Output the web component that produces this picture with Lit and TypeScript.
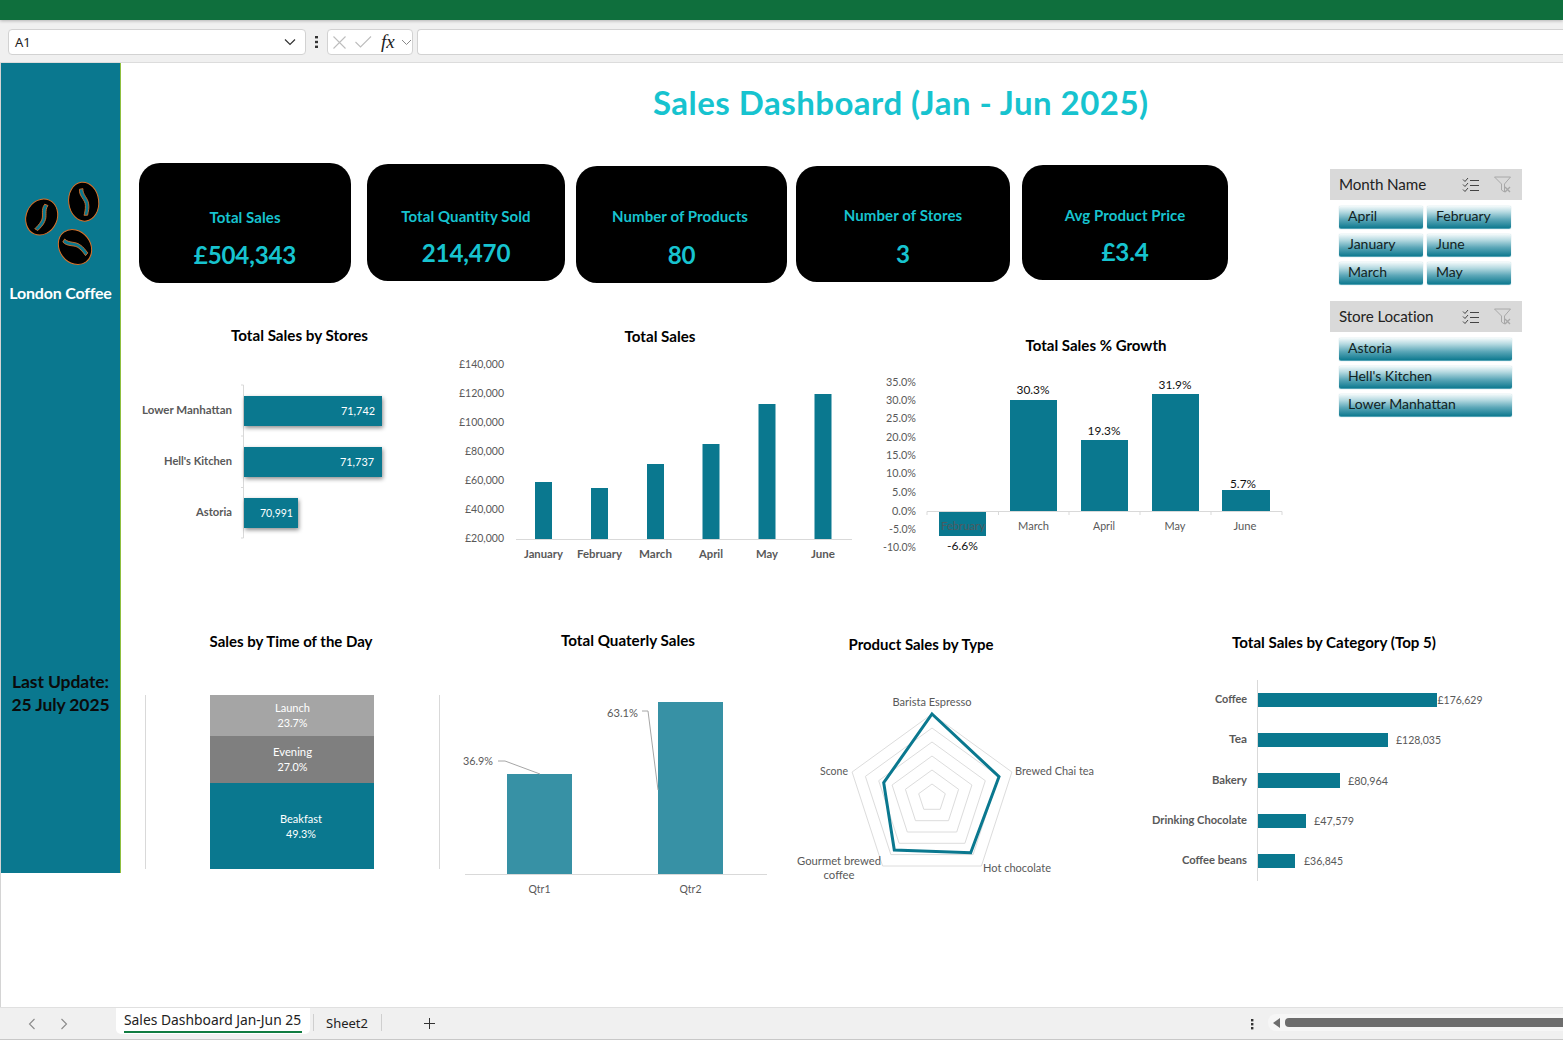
import { LitElement, html, svg, css, nothing } from "lit";
import { customElement } from "lit/decorators.js";

const TEAL = "#0a788f";

type Opt = { a?: "start" | "middle" | "end"; len?: number; c?: string };
const t = (x: number, y: number, s: string, o: Opt = {}) =>
  svg`<text x=${x} y=${y - 1} class=${o.c ?? "l"} text-anchor=${o.a ?? "middle"} dominant-baseline="central"
    textLength=${o.len ?? nothing} lengthAdjust=${o.len ? "spacingAndGlyphs" : nothing}>${s}</text>`;
const r = (x: number, y: number, x2: number, y2: number, c = "bar") =>
  svg`<rect class=${c} x=${x} y=${y} width=${x2 - x} height=${y2 - y}></rect>`;
const ln = (x1: number, y1: number, x2: number, y2: number) =>
  svg`<line class="ax" x1=${x1} y1=${y1} x2=${x2} y2=${y2}></line>`;

const chart = (x: number, y: number, w: number, h: number, body: unknown) =>
  html`<svg class="chart" width=${w} height=${h} viewBox="${x} ${y} ${w} ${h}">${body}</svg>`;

const KPIS = [
  { title: "Total Sales", value: "£504,343", w: 212, h: 120, mt: 20, ml: 0, pb: 12, gap: 12, nudge: 0 },
  { title: "Total Quantity Sold", value: "214,470", w: 198, h: 117, mt: 21, ml: 16, pb: 12, gap: 11, nudge: 0 },
  { title: "Number of Products", value: "80", w: 211, h: 117, mt: 23, ml: 11, pb: 12, gap: 13, nudge: -3 },
  { title: "Number of Stores", value: "3", w: 214, h: 116, mt: 23, ml: 9, pb: 12, gap: 13, nudge: 0 },
  { title: "Avg Product Price", value: "£3.4", w: 206, h: 115, mt: 22, ml: 12, pb: 12, gap: 11, nudge: 0 },
];

const MONTHS = ["April", "February", "January", "June", "March", "May"];
const STORES = ["Astoria", "Hell's Kitchen", "Lower Manhattan"];

const bean = (cx: number, cy: number, rx: number, ry: number, rot: number, grot: number) => svg`
  <g transform="translate(${cx} ${cy})">
    <ellipse rx=${rx} ry=${ry} transform="rotate(${rot})" fill="#000" stroke="#d9722b" stroke-width="1"></ellipse>
    <path transform="rotate(${grot})" d="M-2 -13 C-4 -6 2 -2 1 4 C0.5 8 -1 11 -2 13.5 L1.5 14 C3 10 4.5 7 4.5 3 C5 -3 0 -7 1.5 -13 Z"
      fill=${TEAL} stroke="#d9722b" stroke-width="0.8"></path>
  </g>`;

@customElement("app-root")
export class AppRoot extends LitElement {
  static styles = css`
    :host { display: block; width: 1563px; height: 1040px; overflow: hidden; background: #fff; font-family: "Lato", sans-serif; }
    .ribbon { height: 20px; background: #0f6f3d; box-shadow: 0 1px 3px rgba(0,0,0,.25); position: relative; }
    .fbar { height: 43px; box-sizing: border-box; background: #f0f0f0; border-bottom: 1px solid #dcdcdc; display: flex; align-items: flex-start; padding: 9px 0 0 8px; }
    .box { height: 26px; box-sizing: border-box; background: #fff; border: 1px solid #d2d2d2; border-radius: 4px; display: flex; align-items: center; }
    .name { width: 298px; padding: 0 9px 0 6px; justify-content: space-between; font: 13px "Noto Sans", sans-serif; color: #222; }
    .dots { width: 21px; display: flex; justify-content: center; height: 26px; align-items: center; }
    .fx { width: 86px; padding-left: 5px; gap: 9px; }
    .fxt { font: italic 19px "Liberation Serif", serif; color: #222; margin-right: -3px; }
    .formula { flex: 1; margin-left: 4px; border-right: none; border-radius: 4px 0 0 4px; }

    .sheet { height: 944px; display: flex; align-items: flex-start; border-left: 1px solid #d4d4d4; box-sizing: border-box; }
    .side { width: 120px; height: 810px; box-sizing: border-box; background: #0a788f; border-right: 1px solid #8fbf3f; flex: none; display: flex; flex-direction: column; align-items: center; }
    .logo { margin-top: 116px; display: block; }
    .brand { color: #fff; font-weight: 700; font-size: 16px; letter-spacing: -.2px; line-height: 20px; margin-top: 16px; white-space: nowrap; }
    .update { margin-top: 367px; color: #0b0b0b; font-weight: 700; font-size: 17.5px; line-height: 23px; text-align: center; letter-spacing: -.1px; white-space: nowrap; }

    .main { width: 1442px; flex: none; }
    .upper { display: flex; }
    .uleft { width: 1209px; flex: none; }
    .title { height: 80px; line-height: 78px; padding-left: 532px; color: #17c3cf; font-weight: 700; font-size: 33px; letter-spacing: .47px; white-space: nowrap; }
    .kpis { height: 177px; display: flex; align-items: flex-start; padding-left: 18px; box-sizing: border-box; }
    .kpi { background: #000; border-radius: 21px; flex: none; box-sizing: border-box; display: flex; flex-direction: column; align-items: center; justify-content: flex-end; color: #17c3cf; font-weight: 700; }
    .kpi-t { font-size: 15px; line-height: 20px; letter-spacing: .08px; white-space: nowrap; }
    .kpi-v { font-size: 24.2px; line-height: 32px; letter-spacing: -.2px; }
    .charts { display: flex; padding-left: 9px; }
    .lower { margin-top: 45px; }
    .chart { display: block; flex: none; }
    .l { font-size: 11px; fill: #595959; }
    .b { font-size: 11px; fill: #595959; font-weight: 700; }
    .k { font-size: 11px; fill: #111; }
    .w { font-size: 11px; fill: #fff; }
    .feb { font-size: 11px; fill: #4d5a60; }
    .h { font-size: 14.5px; fill: #000; font-weight: 700; }
    .bar { fill: #0a788f; }
    .sh { fill: #0a788f; filter: drop-shadow(1.5px 2px 2px rgba(0,0,0,.45)); }
    .lt { fill: #3791a5; }
    .g1 { fill: #a5a5a5; }
    .g2 { fill: #7f7f7f; }
    .ax { stroke: #d9d9d9; stroke-width: 1; fill: none; }
    .lead { stroke: #a6a6a6; stroke-width: 1; fill: none; }
    .ring { stroke: #dcdcdc; stroke-width: 1; fill: none; }
    .data { stroke: #0a788f; stroke-width: 3; fill: none; stroke-linejoin: miter; }

    .slicers { width: 192px; margin-top: 106px; flex: none; }
    .sl + .sl { margin-top: 16px; }
    .sl-h { height: 31px; box-sizing: border-box; background: #d9d9d9; display: flex; align-items: center; padding: 0 10px 0 9px; font-size: 15.2px; color: #222; letter-spacing: -.1px; }
    .sl-h span { flex: 1; margin-top: -2px; }
    .sl-h svg { display: block; margin-left: 14px; }
    .btns { display: grid; gap: 5px 4px; padding: 6px 10px 0 9px; }
    .two { grid-template-columns: 84px 84px; padding-right: 11px; }
    .one { grid-template-columns: 173px; }
    .btn { height: 23px; box-sizing: border-box; border-radius: 2px; border-bottom: 1px solid #4fa0b3; background: linear-gradient(#f4fafb 0%, #b4d9e0 28%, #5aa6b7 62%, #0f7a90 100%); padding-left: 9px; font-size: 14px; line-height: 20px; color: #122; box-shadow: 0 0 1px rgba(10,120,143,.5); white-space: nowrap; }

    .tabs { height: 33px; box-sizing: border-box; background: #f0f0f0; border-top: 1px solid #e0e0e0; border-bottom: 1px solid #c8c8c8; display: flex; align-items: flex-start; font: 13px "Noto Sans", sans-serif; color: #222; }
    .nav { width: 116px; flex: none; height: 31px; display: flex; align-items: center; padding-left: 27px; gap: 22px; box-sizing: border-box; }
    .tab { width: 194px; height: 26px; flex: none; box-sizing: border-box; background: #fff; border-radius: 0 0 5px 5px; padding: 2px 8px 0; }
    .tab div { border-bottom: 2px solid #107c41; line-height: 19px; height: 23px; box-sizing: border-box; white-space: nowrap; font-size: 13.85px; }
    .sep { width: 1px; height: 17px; background: #cfcfcf; margin-top: 6px; flex: none; }
    .sheet2 { padding: 6px 0 0 12px; width: 67px; box-sizing: border-box; line-height: 19px; flex: none; }
    .plus { margin-left: 41px; margin-top: 9px; display: block; flex: none; }
    .grow { flex: 1; }
    .rdots { height: 31px; display: flex; align-items: center; width: 17px; flex: none; margin-top: 1px; }
    .sb { width: 295px; flex: none; height: 17px; margin-top: 6px; background: #f6f6f6; border-radius: 8px 0 0 8px; display: flex; align-items: center; padding-left: 4px; box-sizing: border-box; gap: 5px; }
    .thumb { flex: 1; height: 9px; background: #6d6d6d; border-radius: 4px 0 0 4px; }
  `;

  private chart1() {
    return chart(130, 320, 300, 260, svg`
      ${t(299.5, 336, "Total Sales by Stores", { c: "h", len: 137 })}
      ${ln(243.5, 385, 243.5, 538)}
      ${[385, 436, 487.5, 538].map((y) => ln(241, y, 243.5, y))}
      ${r(244, 396, 382, 426, "sh")}${r(244, 447, 382, 477, "sh")}${r(244, 498, 298, 528, "sh")}
      ${t(232, 410, "Lower Manhattan", { a: "end", c: "b", len: 90 })}
      ${t(232, 461, "Hell's Kitchen", { a: "end", c: "b", len: 68 })}
      ${t(232, 512, "Astoria", { a: "end", c: "b", len: 36 })}
      ${t(375, 411, "71,742", { a: "end", c: "w", len: 34 })}
      ${t(374, 462, "71,737", { a: "end", c: "w", len: 34 })}
      ${t(293, 513, "70,991", { a: "end", c: "w", len: 33 })}
    `);
  }

  private chart2() {
    const ys = ["£140,000", "£120,000", "£100,000", "£80,000", "£60,000", "£40,000", "£20,000"];
    const bars: [string, number, number, number][] = [
      ["January", 543.5, 482, 39], ["February", 599.5, 488, 45], ["March", 655.5, 464, 33],
      ["April", 711, 444, 24], ["May", 767, 404, 22], ["June", 823, 394, 24],
    ];
    return chart(430, 320, 430, 260, svg`
      ${t(660, 337, "Total Sales", { c: "h", len: 71 })}
      ${ys.map((s, i) => t(504, 364 + i * 29, s, { a: "end", len: s.length === 8 ? 45 : 39 }))}
      ${ln(516, 539.5, 852, 539.5)}
      ${bars.map(([m, x, top, w]) => svg`${r(x - 8.5, top, x + 8.5, 539)}${t(x, 554, m, { c: "b", len: w })}`)}
    `);
  }

  private chart3() {
    const ys = ["35.0%", "30.0%", "25.0%", "20.0%", "15.0%", "10.0%", "5.0%", "0.0%", "-5.0%", "-10.0%"];
    const w = [30, 30, 30, 30, 30, 30, 24, 24, 27, 33];
    const yp = [382, 400, 418, 437, 455, 473, 492, 511, 529, 547];
    return chart(860, 320, 440, 260, svg`
      ${t(1096, 346, "Total Sales % Growth", { c: "h", len: 141 })}
      ${ys.map((s, i) => t(916, yp[i], s, { a: "end", len: w[i] }))}
      ${ln(927, 511.5, 1282, 511.5)}
      ${[927, 998.5, 1069, 1140, 1211, 1282].map((x) => ln(x, 511.5, x, 515))}
      ${r(939, 512, 986, 536)}${r(1010, 400, 1057, 511)}${r(1081, 440, 1128, 511)}${r(1152, 394, 1199, 511)}${r(1222, 490, 1270, 511)}
      ${t(1033, 390, "30.3%", { c: "k", len: 33 })}${t(1104, 431, "19.3%", { c: "k", len: 33 })}
      ${t(1175, 385, "31.9%", { c: "k", len: 33 })}${t(1243, 484, "5.7%", { c: "k", len: 26 })}
      ${t(962.5, 546, "-6.6%", { c: "k", len: 31 })}
      ${t(963, 526, "February", { c: "feb", len: 44 })}${t(1033.5, 526, "March", { len: 31 })}
      ${t(1104, 526, "April", { len: 22 })}${t(1175, 526, "May", { len: 21 })}${t(1245, 526, "June", { len: 23 })}
    `);
  }

  private chart4() {
    return chart(130, 625, 305, 270, svg`
      ${t(291, 642, "Sales by Time of the Day", { c: "h", len: 163 })}
      ${ln(145.5, 695, 145.5, 869)}
      ${r(210, 695, 374, 736, "g1")}${r(210, 736, 374, 783, "g2")}${r(210, 783, 374, 869)}
      ${t(292.5, 708, "Launch", { c: "w", len: 35 })}${t(292.5, 723, "23.7%", { c: "w", len: 30 })}
      ${t(292.5, 752, "Evening", { c: "w", len: 39 })}${t(292.5, 767, "27.0%", { c: "w", len: 30 })}
      ${t(301, 819, "Beakfast", { c: "w", len: 42 })}${t(301, 834, "49.3%", { c: "w", len: 30 })}
    `);
  }

  private chart5() {
    return chart(435, 625, 350, 270, svg`
      ${t(628, 641, "Total Quaterly Sales", { c: "h", len: 134 })}
      ${ln(439.5, 695, 439.5, 869)}
      ${r(507, 774, 572, 874, "lt")}${r(658, 702, 723, 874, "lt")}
      ${ln(465, 874.5, 767, 874.5)}
      <polyline class="lead" points="498,761 505,761 540,774"></polyline>
      <polyline class="lead" points="642,711 648,711 658,790"></polyline>
      ${t(478, 761, "36.9%", { c: "l", len: 30 })}${t(622.5, 713, "63.1%", { c: "l", len: 31 })}
      ${t(539.5, 889, "Qtr1", { len: 22 })}${t(690.5, 889, "Qtr2", { len: 22 })}
    `);
  }

  private chart6() {
    const cx = 932, cy = 798, R = 84;
    const pts = (rad: number) =>
      [0, 1, 2, 3, 4].map((i) => {
        const a = -Math.PI / 2 + (i * 2 * Math.PI) / 5;
        return `${(cx + rad * Math.cos(a)).toFixed(1)},${(cy + rad * Math.sin(a)).toFixed(1)}`;
      }).join(" ");
    return chart(785, 625, 335, 270, svg`
      ${t(921, 645, "Product Sales by Type", { c: "h", len: 145 })}
      ${[1, 2, 3, 4, 5, 6].map((i) => svg`<polygon class="ring" points=${pts((R * i) / 6)}></polygon>`)}
      <polygon class="data" points="932,714 999,776.7 970.7,852.7 894.3,850 883.7,782.7"></polygon>
      ${t(932, 702, "Barista Espresso", { len: 79 })}
      ${t(1015, 771, "Brewed Chai tea", { a: "start", len: 79 })}
      ${t(983, 868, "Hot chocolate", { a: "start", len: 68 })}
      ${t(839, 861, "Gourmet brewed", { len: 84 })}${t(839, 875, "coffee", { len: 31 })}
      ${t(848, 771, "Scone", { a: "end", len: 28 })}
    `);
  }

  private chart7() {
    const rows: [string, number, number, number, string, number, number, number][] = [
      ["Coffee", 32, 693, 707, "£176,629", 1437.5, 45, 699],
      ["Tea", 18, 733, 747, "£128,035", 1396, 45, 739],
      ["Bakery", 35, 773, 788, "£80,964", 1348, 40, 780],
      ["Drinking Chocolate", 95, 814, 828, "£47,579", 1314, 40, 820],
      ["Coffee beans", 65, 854, 868, "£36,845", 1304, 39, 860],
    ];
    const ends = [1437, 1388, 1340, 1306, 1295];
    return chart(1120, 625, 400, 270, svg`
      ${t(1334, 643, "Total Sales by Category (Top 5)", { c: "h", len: 204 })}
      ${ln(1257.5, 680, 1257.5, 881)}
      ${rows.map(([n, nl, y1, y2, v, vx, vl, ly], i) => svg`
        ${r(1258, y1, ends[i], y2)}
        ${t(1247, ly, n, { a: "end", c: "b", len: nl })}
        ${t(vx, ly + 1, v, { a: "start", len: vl })}
      `)}
    `);
  }

  private checklist() {
    return html`<svg width="18" height="16" viewBox="0 0 18 16" fill="none" stroke="#444" stroke-width="1">
      <path d="M1 2.5l2 2 3-3.5M1 7.5l2 2 3-3.5M1 12.5l2 2 3-3.5M8 3.5h9M8 8.5h9M8 13.5h9"></path></svg>`;
  }
  private filter() {
    return html`<svg width="18" height="17" viewBox="0 0 18 17" fill="none" stroke="#a8a8a8" stroke-width="1">
      <path d="M.5 1h16L10.5 8v8l-3-2V8z"></path><path d="M11 11l5 5M16 11l-5 5" stroke-width="1.4"></path></svg>`;
  }
  private slicer(name: string, items: string[], cls: string) {
    return html`<div class="sl">
      <div class="sl-h"><span>${name}</span>${this.checklist()}${this.filter()}</div>
      <div class="btns ${cls}">${items.map((m) => html`<div class="btn">${m}</div>`)}</div>
    </div>`;
  }

  render() {
    return html`
      <div class="ribbon"></div>
      <div class="fbar">
        <div class="box name"><span>A1</span>
          <svg width="12" height="8" viewBox="0 0 12 8" fill="none" stroke="#333" stroke-width="1.2"><path d="M1 1.5l5 5 5-5"></path></svg>
        </div>
        <div class="dots"><svg width="3" height="12" viewBox="0 0 3 12" fill="#333"><rect y="0" width="3" height="2.4"></rect><rect y="4.8" width="3" height="2.4"></rect><rect y="9.6" width="3" height="2.4"></rect></svg></div>
        <div class="box fx">
          <svg width="13" height="13" viewBox="0 0 13 13" fill="none" stroke="#bdbdbd" stroke-width="1.1"><path d="M.5.5l12 12M12.5.5l-12 12"></path></svg>
          <svg width="17" height="12" viewBox="0 0 17 12" fill="none" stroke="#bdbdbd" stroke-width="1.1"><path d="M.5 6l5 5L16 .5"></path></svg>
          <span class="fxt">fx</span>
          <svg width="11" height="7" viewBox="0 0 11 7" fill="none" stroke="#888" stroke-width="1"><path d="M1 1l4.5 4.5L10 1"></path></svg>
        </div>
        <div class="box formula"></div>
      </div>

      <div class="sheet">
        <div class="side">
          <svg class="logo" width="100" height="88" viewBox="10 178 100 88">
            ${bean(40.7, 216, 15.5, 18.5, 24, 22)}
            ${bean(82.7, 200.7, 15, 19.5, -7, -10)}
            ${bean(74, 246, 15.5, 18.5, -37, -59)}
          </svg>
          <div class="brand">London Coffee</div>
          <div class="update">Last Update:<br />25 July 2025</div>
        </div>
        <div class="main">
          <div class="upper">
            <div class="uleft">
              <div class="title">Sales Dashboard (Jan - Jun 2025)</div>
              <div class="kpis">
                ${KPIS.map((k) => html`
                  <div class="kpi" style="width:${k.w}px;height:${k.h}px;margin-top:${k.mt}px;margin-left:${k.ml}px;padding-bottom:${k.pb}px;gap:${k.gap}px">
                    <div class="kpi-t" style="margin-left:${k.nudge}px">${k.title}</div>
                    <div class="kpi-v">${k.value}</div>
                  </div>`)}
              </div>
              <div class="charts">${this.chart1()}${this.chart2()}${this.chart3()}</div>
            </div>
            <div class="slicers">
              ${this.slicer("Month Name", MONTHS, "two")}
              ${this.slicer("Store Location", STORES, "one")}
            </div>
          </div>
          <div class="charts lower">${this.chart4()}${this.chart5()}${this.chart6()}${this.chart7()}</div>
        </div>
      </div>

      <div class="tabs">
        <div class="nav">
          <svg width="10" height="12" viewBox="0 0 10 12" fill="none" stroke="#8a8a8a" stroke-width="1.1"><path d="M7.5 1L2.5 6l5 5"></path></svg>
          <svg width="10" height="12" viewBox="0 0 10 12" fill="none" stroke="#8a8a8a" stroke-width="1.1"><path d="M2.5 1l5 5-5 5"></path></svg>
        </div>
        <div class="tab"><div>Sales Dashboard Jan-Jun 25</div></div>
        <div class="sep" style="margin-left:3px"></div>
        <div class="sheet2">Sheet2</div>
        <div class="sep"></div>
        <svg class="plus" width="13" height="13" viewBox="0 0 13 13" stroke="#333" stroke-width="1"><path d="M6.5 1v11M1 6.5h11"></path></svg>
        <div class="grow"></div>
        <div class="rdots"><svg width="3" height="11" viewBox="0 0 3 11" fill="#333"><rect width="2.4" height="2.4"></rect><rect y="4" width="2.4" height="2.4"></rect><rect y="8" width="2.4" height="2.4"></rect></svg></div>
        <div class="sb">
          <svg width="8" height="10" viewBox="0 0 8 10" fill="#6d6d6d"><path d="M8 0v10L1 5z"></path></svg>
          <div class="thumb"></div>
        </div>
      </div>
    `;
  }
}
